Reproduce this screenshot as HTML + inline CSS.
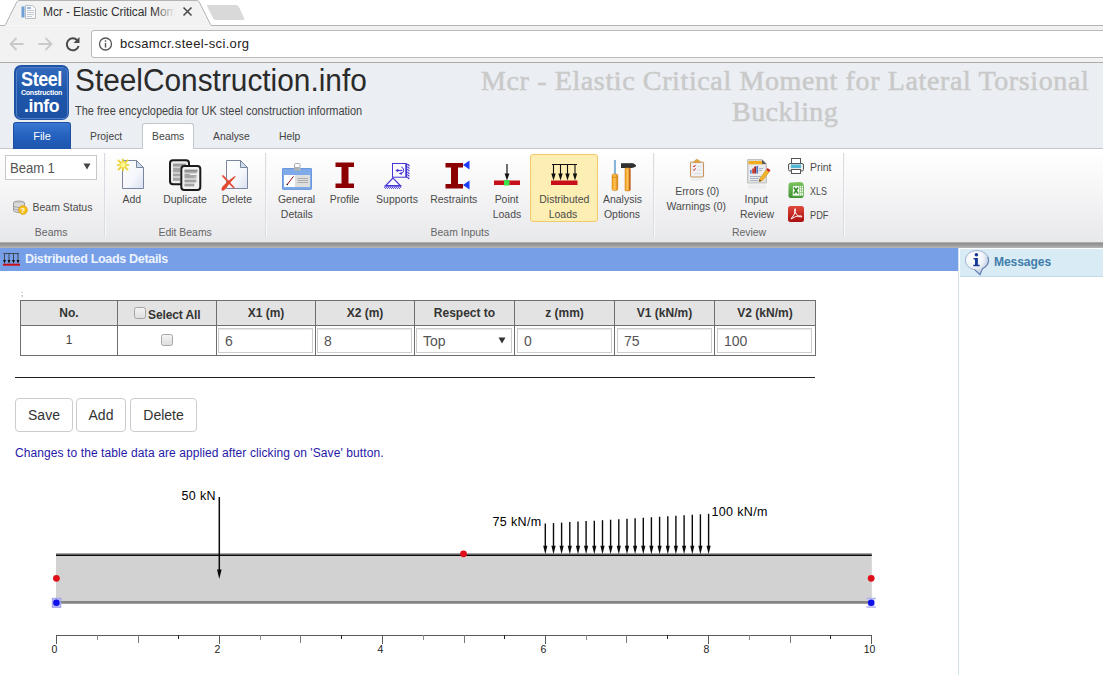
<!DOCTYPE html>
<html><head><meta charset="utf-8">
<style>
*{box-sizing:border-box;margin:0;padding:0}
html,body{width:1103px;height:675px;overflow:hidden;background:#fff;font-family:"Liberation Sans",sans-serif;}
.a{position:absolute}
.t{position:absolute;white-space:nowrap;line-height:1}
#chrome-top{left:0;top:0;width:1103px;height:26px;background:#fff}
#toolbar{left:0;top:26px;width:1103px;height:37px;background:#f2f2f2;border-bottom:1px solid #ababab}
#urlbox{left:91px;top:30px;width:1030px;height:28px;background:#fff;border:1px solid #b9b9b9;border-radius:3px}
#hdr{left:0;top:63px;width:1103px;height:86px;background:#ebeef2}
#ribbon{left:0;top:149px;width:1103px;height:93px;background:linear-gradient(#ffffff 0%,#f7f7f8 40%,#efeff1 70%,#e8e9eb 100%)}
#greybar{left:0;top:241.500px;width:1103px;height:6.500px;background:linear-gradient(#c9c9c9 0,#8e8e8e 18%,#9b9b9b 55%,#b8b8b8 100%)}
#bluebar{left:0;top:248px;width:958px;height:23px;background:#769fe8}
.rl{position:absolute;white-space:nowrap;font-size:11px;color:#4a4a4a;line-height:15px;text-align:center}
.rl span,.gl span{display:inline-block;transform:scaleX(.95)}
.gl{position:absolute;white-space:nowrap;font-size:11px;color:#666;line-height:15px;text-align:center}
.sg{font-size:11px;color:#444;transform:scaleX(.94);transform-origin:0 0}
.sep{position:absolute;top:153px;width:1px;height:84px;background:#d9dce1;box-shadow:1px 0 0 #f8f9fb}
.vl{top:301px;width:1px;height:54px;background:#6e6e6e}
.th{top:307px;text-align:center;font-size:12px;font-weight:bold;color:#333}
.cb{width:12px;height:12px;border:1px solid #a5a5a5;border-radius:2.500px;background:linear-gradient(#f3f3f3,#dedede)}
.inp{position:absolute;top:328px;height:25px;box-shadow:inset 0 1px 1px rgba(0,0,0,.08);background:#fff;border:1px solid #ccc;font-size:14px;color:#555;line-height:25px;padding-left:6px}
.btn{position:absolute;top:398px;height:34px;background:#fff;border:1px solid #ccc;border-radius:4px;font-size:14px;color:#333;line-height:32px;text-align:center}
</style></head><body>

<!-- browser chrome -->
<div class="a" id="chrome-top"></div>
<svg class="a" style="left:0;top:0" width="260" height="27">
  <path d="M0 25.5 L5 25.5 L17 1.5 Q18 0.5 20 0.5 L196 0.5 Q198 0.5 199 1.5 L211 25.5 L260 25.5" fill="#f2f2f2" stroke="#b4b4b4" stroke-width="1"/>
  <rect x="0" y="26" width="260" height="1" fill="#f2f2f2"/>
  <path d="M207 5 L236 5 Q238 5 239 7 L244 18 Q245 20 243 20 L216 20 Q214 20 213 18 L207.500 7 Q206.500 5 207 5Z" fill="#d9d9d9"/>
</svg>
<div class="a" style="left:211px;top:25px;width:892px;height:1px;background:#b4b4b4"></div>
<div class="a" id="toolbar"></div>
<div class="a" id="urlbox"></div>
<div class="t" style="left:43px;top:6px;font-size:12px;color:#333;width:132px;overflow:hidden;letter-spacing:-0.1px">Mcr - Elastic Critical Mom</div>
<div class="a" style="left:155px;top:4px;width:20px;height:18px;background:linear-gradient(90deg,rgba(242,242,242,0),#f2f2f2)"></div>
<div class="t" style="left:120px;top:37px;font-size:13px;color:#222;letter-spacing:0.35px">bcsamcr.steel-sci.org</div>
<svg class="a" style="left:0;top:0" width="120" height="62">
  <!-- favicon -->
  <rect x="21.500" y="6.500" width="3" height="11" fill="#6ea0d8" stroke="none"/>
  <path d="M25.500 5.500 L32.500 5.500 L35.500 8.500 L35.500 18.500 L25.500 18.500Z" fill="#fafafa" stroke="#b8bcc4"/>
  <path d="M27 10.500H34M27 12.500H34M27 14.500H34M27 16.500H32" stroke="#c5c9d2" stroke-width="1"/>
  <rect x="27" y="7" width="4" height="2" fill="#9db8dc"/>
  <!-- back -->
  <path d="M23.500 44 H10.500 M16.500 38 L10.500 44 L16.500 50" fill="none" stroke="#c9c9c9" stroke-width="1.800"/>
  <!-- forward -->
  <path d="M38.500 44 H51.500 M45.500 38 L51.500 44 L45.500 50" fill="none" stroke="#c9c9c9" stroke-width="1.800"/>
  <!-- reload -->
  <path d="M77.200 40.200 A6 6 0 1 0 78.600 46" fill="none" stroke="#4a4a4a" stroke-width="2"/>
  <path d="M79.500 37 L79.500 43 L73.500 43Z" fill="#4a4a4a"/>
  <!-- info -->
  <circle cx="105.500" cy="44" r="6" fill="none" stroke="#555" stroke-width="1.300"/>
  <rect x="104.800" y="43" width="1.400" height="4.500" fill="#555"/>
  <rect x="104.800" y="40.300" width="1.400" height="1.500" fill="#555"/>
</svg>
<svg class="a" style="left:180px;top:4px" width="16" height="16"><path d="M3.500 3.500 L11.500 11.500 M11.500 3.500 L3.500 11.500" stroke="#4a4a4a" stroke-width="1.600"/></svg>

<!-- page header -->
<div class="a" id="hdr"></div>
<!-- logo -->
<div class="a" style="left:14px;top:65px;width:55px;height:55px;border-radius:7px;background:#1f53a6"></div>
<div class="a" style="left:16.500px;top:67.500px;width:50px;height:50px;border-radius:4.500px;background:linear-gradient(#3269bd,#1f57ab 45%,#1c50a2);box-shadow:0 0 0 1px rgba(120,160,225,.55)"></div>
<div class="t" style="left:14px;top:69px;width:55px;text-align:center;font-size:20px;font-weight:bold;color:#fff;letter-spacing:-0.5px;transform:scaleX(.9)">Steel</div>
<div class="t" style="left:14px;top:89px;width:55px;text-align:center;font-size:7px;font-weight:bold;color:#fff;letter-spacing:-0.2px">Construction</div>
<div class="t" style="left:14px;top:96px;width:55px;text-align:center;font-size:19px;font-weight:bold;color:#fff;letter-spacing:-0.5px;transform:scaleX(.93)">.info</div>
<div class="t" style="left:74.500px;top:65px;font-size:31px;color:#2a2a2a;letter-spacing:0;transform:scaleX(.962);transform-origin:0 0">SteelConstruction.info</div>
<div class="t" style="left:75px;top:105px;font-size:12px;color:#444;letter-spacing:0;transform:scaleX(.912);transform-origin:0 0">The free encyclopedia for UK steel construction information</div>
<div class="t" id="rt1" style="left:481px;top:67px;font-family:'Liberation Serif',serif;font-size:28px;color:#c9c9c9;-webkit-text-stroke:0.5px #c9c9c9;letter-spacing:0.62px">Mcr - Elastic Critical Moment for Lateral Torsional</div>
<div class="t" id="rt2" style="left:732px;top:98px;font-family:'Liberation Serif',serif;font-size:28px;color:#c9c9c9;-webkit-text-stroke:0.5px #c9c9c9;letter-spacing:0.45px">Buckling</div>
<!-- tabs -->
<div class="a" style="left:0;top:148px;width:1103px;height:1px;background:#c3c7cd"></div>
<div class="a" style="left:13px;top:122px;width:58px;height:27px;border-radius:3px 3px 0 0;background:linear-gradient(#3a78d2,#2460bd 50%,#1d55ae);border:1px solid #1d4f9f;border-bottom:none"></div>
<div class="t" style="left:13px;top:131px;width:58px;text-align:center;font-size:11px;color:#fff;letter-spacing:-0.1px">File</div>
<div class="t sg" style="left:90px;top:131px;">Project</div>
<div class="a" style="left:142px;top:123px;width:52px;height:27px;border-radius:3px 3px 0 0;background:#fff;border:1px solid #c3c7cd;border-bottom:none"></div>
<div class="t sg" style="left:152px;top:131px;">Beams</div>
<div class="t sg" style="left:213px;top:131px;">Analyse</div>
<div class="t sg" style="left:279px;top:131px;">Help</div>
<div class="a" id="ribbon"></div>

<!-- ribbon content -->
<div class="sep" style="left:104px"></div>
<div class="sep" style="left:265px"></div>
<div class="sep" style="left:653px"></div>
<div class="sep" style="left:843px"></div>
<div class="a" style="left:5px;top:155px;width:92px;height:25px;background:#fff;border:1px solid #c8c8c8"></div>
<div class="t" style="left:10px;top:161px;font-size:14px;color:#555;letter-spacing:-0.1px;transform:scaleX(.94);transform-origin:0 0">Beam 1</div>
<svg class="a" style="left:83px;top:163px" width="8" height="7"><path d="M0.500 0.500 L7.500 0.500 L4 6.500Z" fill="#444"/></svg>
<div class="a" style="left:530px;top:154px;width:68px;height:68px;background:#fdeeb3;border:1px solid #f2ca6b;border-radius:3px"></div>
<div class="rl" style="left:2px;top:200px;width:120px"><span>Beam Status</span></div>
<div class="gl" style="left:-9px;top:225px;width:120px"><span>Beams</span></div>
<div class="rl" style="left:72px;top:192px;width:120px"><span>Add</span></div>
<div class="rl" style="left:125px;top:192px;width:120px"><span>Duplicate</span></div>
<div class="rl" style="left:177px;top:192px;width:120px"><span>Delete</span></div>
<div class="gl" style="left:125px;top:225px;width:120px"><span>Edit Beams</span></div>
<div class="rl" style="left:237px;top:192px;width:120px"><span>General</span></div>
<div class="rl" style="left:237px;top:207px;width:120px"><span>Details</span></div>
<div class="rl" style="left:285px;top:192px;width:120px"><span>Profile</span></div>
<div class="rl" style="left:337px;top:192px;width:120px"><span>Supports</span></div>
<div class="rl" style="left:394px;top:192px;width:120px"><span>Restraints</span></div>
<div class="rl" style="left:447px;top:192px;width:120px"><span>Point</span></div>
<div class="rl" style="left:447px;top:207px;width:120px"><span>Loads</span></div>
<div class="gl" style="left:400px;top:225px;width:120px"><span>Beam Inputs</span></div>
<div class="rl" style="left:504px;top:192px;width:120px"><span>Distributed</span></div>
<div class="rl" style="left:503px;top:207px;width:120px"><span>Loads</span></div>
<div class="rl" style="left:562px;top:192px;width:120px"><span>Analysis</span></div>
<div class="rl" style="left:562px;top:207px;width:120px"><span>Options</span></div>
<div class="rl" style="left:637px;top:184px;width:120px"><span>Errors (0)</span></div>
<div class="rl" style="left:636px;top:199px;width:120px"><span>Warnings (0)</span></div>
<div class="rl" style="left:696px;top:192px;width:120px"><span>Input</span></div>
<div class="rl" style="left:697px;top:207px;width:120px"><span>Review</span></div>
<div class="gl" style="left:689px;top:225px;width:120px"><span>Review</span></div>
<div class="rl" style="left:809.500px;top:160px;text-align:left"><span style="transform-origin:0 50%">Print</span></div>
<div class="rl" style="left:809.500px;top:184px;text-align:left"><span style="transform-origin:0 50%;transform:scaleX(.81)">XLS</span></div>
<div class="rl" style="left:809.500px;top:208px;text-align:left"><span style="transform-origin:0 50%;transform:scaleX(.84)">PDF</span></div>

<svg class="a" style="left:0;top:149px" width="860" height="92" viewBox="0 149 860 92">
<defs>
<linearGradient id="pg" x1="0" y1="0" x2="1" y2="1"><stop offset="0" stop-color="#ffffff"/><stop offset="0.6" stop-color="#f4f6fb"/><stop offset="1" stop-color="#d9e0f0"/></linearGradient>
<radialGradient id="glow"><stop offset="0" stop-color="#fff7a0"/><stop offset="0.6" stop-color="#fdee7a" stop-opacity=".8"/><stop offset="1" stop-color="#fdee7a" stop-opacity="0"/></radialGradient>
<linearGradient id="org" x1="0" y1="0" x2="1" y2="0"><stop offset="0" stop-color="#f6a21a"/><stop offset="0.5" stop-color="#fbc35a"/><stop offset="1" stop-color="#d97b06"/></linearGradient>
<linearGradient id="grn" x1="0" y1="0" x2="0" y2="1"><stop offset="0" stop-color="#7cc660"/><stop offset="1" stop-color="#3d9130"/></linearGradient>
<linearGradient id="red" x1="0" y1="0" x2="0" y2="1"><stop offset="0" stop-color="#e0483c"/><stop offset="1" stop-color="#a80f0f"/></linearGradient>
</defs>
<!-- beam status -->
<g>
<ellipse cx="19" cy="203" rx="5.500" ry="2" fill="#c9c9c9" stroke="#8f8f8f" stroke-width=".8"/>
<path d="M13.500 203 V210.500 A5.500 2 0 0 0 24.500 210.500 V203" fill="#d8d8d8" stroke="#8f8f8f" stroke-width=".8"/>
<path d="M13.500 205.500 A5.500 2 0 0 0 24.500 205.500 M13.500 208 A5.500 2 0 0 0 24.500 208" fill="none" stroke="#8f8f8f" stroke-width=".7"/>
<circle cx="23" cy="210" r="4.300" fill="#f7c21e" stroke="#d99a07" stroke-width=".8"/>
<text x="23" y="212.600" font-family="Liberation Sans" font-size="7" font-weight="bold" fill="#fff" text-anchor="middle">?</text>
</g>
<!-- add -->
<path d="M122.500 160.500 H136.500 L143.500 167.500 V188.500 H122.500Z" fill="url(#pg)" stroke="#7a869e" stroke-width="1"/>
<path d="M136.500 160.500 V167.500 H143.500Z" fill="#d3dcee" stroke="#7a869e" stroke-width="1" stroke-linejoin="round"/>
<circle cx="123" cy="165" r="5" fill="url(#glow)"/><g stroke="#e9cf2c" stroke-width="1.700" stroke-linecap="butt" opacity=".95"><path d="M125.2 165.0L129.3 165.0M124.6 166.6L128.1 170.1M123.0 167.2L123.0 171.3M121.4 166.6L117.9 170.1M120.8 165.0L116.7 165.0M121.4 163.4L117.9 159.9M123.0 162.8L123.0 158.7M124.6 163.4L128.1 159.9"/></g><circle cx="123" cy="165" r="2.400" fill="#fff68c"/>

<!-- duplicate -->
<rect x="170" y="160.300" width="19" height="24" rx="3" fill="#ededed" stroke="#1a1a1a" stroke-width="2"/>
<rect x="173" y="163.500" width="13" height="3" fill="#a9a9a9"/><rect x="173" y="167.500" width="7" height="5" fill="#b4b4b4"/><rect x="173" y="173.500" width="7" height="3" fill="#b0b0b0"/><rect x="173" y="177.500" width="7" height="3.500" fill="#b4b4b4"/>
<g stroke="#888" stroke-width=".6"><path d="M173 164.500H186M173 166H185M173 169H180M173 171H180M173 175H180M173 179H180"/></g>
<rect x="181.300" y="166" width="19" height="24" rx="3" fill="#f3f3f3" stroke="#1a1a1a" stroke-width="2"/>
<rect x="184.500" y="169.500" width="13" height="3" fill="#a4a4a4"/><rect x="184.500" y="173.500" width="12" height="5" fill="#b6b6b6"/><rect x="184.500" y="179.500" width="12" height="3" fill="#b0b0b0"/><rect x="184.500" y="183.500" width="10" height="3" fill="#b6b6b6"/>
<g stroke="#858585" stroke-width=".6"><path d="M184.500 170.500H197.500M184.500 172H196M184.500 175H196.500M184.500 177H194M184.500 181H196M184.500 185H194"/></g>
<path d="M190 174.500H197" stroke="#f3f3f3" stroke-width="1"/>
<!-- delete -->
<path d="M226.500 160.500 H240.500 L247.500 167.500 V188.500 H226.500Z" fill="url(#pg)" stroke="#7a869e" stroke-width="1"/>
<path d="M240.500 160.500 V167.500 H247.500Z" fill="#d3dcee" stroke="#7a869e" stroke-width="1" stroke-linejoin="round"/>
<path d="M221.600 175.800 Q222.500 174.600 223.800 175.600 Q229 181 234.800 187.600 L233.600 188.600 Q227 182.500 221.600 175.800Z" fill="#e5503a"/>
<path d="M235.600 176.800 L234.800 176 Q228 180.500 223 186 Q220.800 188.800 221.800 190.200 Q223.200 191.400 225.300 189.300 Q229.500 183 235.600 176.800Z" fill="#e4472f"/>
<!-- general details -->
<rect x="282" y="168" width="30" height="21.800" rx="1.200" fill="#7faae9"/>
<rect x="282.500" y="168.500" width="29" height="20.800" rx="1.200" fill="none" stroke="#6a97dc" stroke-width="1"/>
<rect x="284" y="175" width="26" height="12" fill="#dedede"/>
<rect x="284" y="175" width="11" height="12" fill="#fff"/>
<path d="M287.400 184.300 L293.500 176.300" stroke="#8e1010" stroke-width="1"/>
<circle cx="287.300" cy="184.500" r=".8" fill="#111"/>
<path d="M297.500 178.500H308M297.500 180.500H308M297.500 182.500H308" stroke="#adadad" stroke-width="1"/>
<rect x="294.500" y="163.500" width="5.500" height="7" rx="1" fill="#fdfdfd" stroke="#a7adb5" stroke-width="1"/>
<rect x="295" y="167" width="4.500" height="3.300" fill="#a9b0b6"/>
<!-- profile -->
<path d="M335.500 162.500 H354 V167 H348.500 V183.500 H354 V188 H335.500 V183.500 H341.500 V167 H335.500Z" fill="#8b0000"/>
<!-- supports -->
<g stroke="#4636d4" fill="none" stroke-width="1">
<rect x="392.500" y="163.500" width="13.500" height="13.700" fill="#fbfbff"/>
<path d="M406.300 163.500V177.500" stroke-width="1.600"/>
<path d="M407.300 164L409.500 166M407.300 166.600L409.500 168.600M407.300 169.200L409.500 171.200M407.300 171.800L409.500 173.800M407.300 174.400L409.500 176.400M407.300 177L409.200 179" stroke-width="1.100"/>
<path d="M393 178 L385.800 185.500 H400.300Z" fill="#fbfbff" stroke-width="1.100"/>
<path d="M384.500 186.100H401.500" stroke-width="1.200"/>
<path d="M384 187.300H401" stroke-dasharray="1 1" stroke-width="1"/>
<path d="M385 188.300H401" stroke-dasharray="1 1" stroke-width="1"/>
<path d="M396 170.500H402.300" stroke-width="1.100"/>
<path d="M398.300 168.800L395.300 170.500L398.300 172.200Z" fill="#4636d4" stroke="none"/>
<path d="M401.300 167 A3.400 3.400 0 0 1 401.600 173.400" stroke-width="1"/>
<path d="M401.800 171.800L398.800 173.500L401.800 175Z" fill="#4636d4" stroke="none"/>
</g>
<!-- restraints -->
<path d="M445.500 163 H463 V167.500 H458 V184 H463 V188.500 H445.500 V184 H451 V167.500 H445.500Z" fill="#8b0000"/>
<path d="M463 165 L469.500 160.500 V169.500Z M463 185 L469.500 180.500 V189.500Z" fill="#1a3cff"/>
<!-- point loads -->
<rect x="494" y="180.500" width="26" height="4.500" fill="#c8101a"/>
<rect x="504" y="180" width="5.500" height="5.500" fill="#3be04a"/>
<path d="M507 164V178" stroke="#111" stroke-width="1.200"/>
<path d="M504.600 173.500 L507 180.500 L509.400 173.500Z" fill="#111"/>
<!-- distributed loads -->
<rect x="551" y="180.500" width="26.500" height="4.500" fill="#c8101a"/>
<path d="M552 164.500H577M553.500 164.500V177M560.500 164.500V177M567.500 164.500V177M575 164.500V177" stroke="#111" stroke-width="1.100" fill="none"/>
<path d="M551.300 173.500L553.500 180.500L555.700 173.500Z M558.300 173.500L560.500 180.500L562.700 173.500Z M565.300 173.500L567.500 180.500L569.700 173.500Z M572.800 173.500L575 180.500L577.200 173.500Z" fill="#111"/>
<!-- analysis options -->
<rect x="613.900" y="160" width="2.100" height="14.500" fill="#86b6da"/>
<rect x="612" y="174" width="5.800" height="16.600" rx="1.800" fill="url(#org)" stroke="#c97a08" stroke-width=".5"/>
<path d="M612 177.300H617.800" stroke="#c97a08" stroke-width=".7"/>
<path d="M621 163.800 Q621 163 622 163 H631.500 Q633.500 163.200 635.900 165 V166.500 Q634 167.600 631.500 167.900 H621Z" fill="#2f2f2f"/>
<path d="M621.500 163.600H631.500" stroke="#6a6a6a" stroke-width=".8"/>
<rect x="625" y="167.900" width="5.200" height="23" rx="1" fill="url(#org)" stroke="#c26a10" stroke-width=".5"/>
<path d="M629.900 168.500V190" stroke="#a63a1a" stroke-width=".7"/>
<!-- errors clipboard -->
<rect x="690.500" y="162" width="13" height="15" rx="1.200" fill="#f0f1f4" stroke="#c8935c" stroke-width="1.100"/>
<path d="M693.500 162.500 L695.500 160 Q697 158.800 698.500 160 L700.500 162.500Z" fill="#e3a63f" stroke="#c48a35" stroke-width=".6"/>
<path d="M693 166l1 1l1.600-2.200M693 169.500l1 1l1.600-2.200" stroke="#d62828" stroke-width="1" fill="none"/>
<path d="M697 166.500H701.500M697 170H701.500M694 173.500H701" stroke="#d5d8de" stroke-width=".9"/>
<path d="M691 179.500H703.500" stroke="#e4e5e8" stroke-width="1.500" opacity=".7"/>
<!-- input review -->
<path d="M747.500 159.500 H762 L766.500 164 V183 H747.500Z" fill="#d9d9d9" stroke="#c4c4c4" stroke-width="1"/>
<rect x="749" y="164.500" width="16" height="17" fill="#ebebeb"/>
<path d="M748.500 161 H762.500 L765 164.300 H748.500Z" fill="#f2ad1f"/>
<path d="M762 159.500 V164 H766.500Z" fill="#5e5e5e"/>
<rect x="750" y="170" width="1.700" height="3.500" fill="#5b8fd6"/><rect x="752.200" y="168.500" width="1.800" height="5" fill="#cf3a2c"/><rect x="754.200" y="166.500" width="1.800" height="7" fill="#a3231b"/><rect x="756.300" y="166" width="1.800" height="7.500" fill="#5577cc"/>
<path d="M759 168.500H763M759 170.500H762M750 176.500H761M750 178.500H759M750 180.500H758" stroke="#aab4c4" stroke-width="1"/>
<path d="M759.800 178.500 L766.300 169.800 L769.200 172 L762.600 180.600 L759.200 181.600Z" fill="#f0b42c" stroke="#c98a12" stroke-width=".5"/>
<path d="M766.300 169.800 L767.600 168 L770.500 170.200 L769.200 172Z" fill="#cc1f1f"/>
<path d="M759.200 181.600 L759.600 179.600 L761.200 180.900Z" fill="#222"/>
<path d="M748 184.500 H766 V189 H748Z" fill="#e6e7ea" opacity=".55"/>
<!-- print -->
<rect x="791.500" y="158.500" width="9" height="6" fill="#fff" stroke="#555" stroke-width="1"/>
<rect x="788.500" y="163.500" width="15" height="7.500" rx="1.500" fill="#e8eaec" stroke="#555" stroke-width="1"/>
<rect x="791" y="164.500" width="10" height="3.500" fill="#55b7d6"/>
<rect x="791.500" y="169.500" width="9" height="4" fill="#fff" stroke="#555" stroke-width="1"/>
<!-- xls -->
<path d="M788.500 185 Q788.500 183 790.500 182.600 L800 182 Q803.500 182 803.500 184.500 V196 Q803.500 198 801.500 198 H790.500 Q788.500 198 788.500 196Z" fill="url(#grn)"/>
<rect x="792.500" y="185.500" width="11" height="10.500" fill="#f4f9f1" stroke="#6aae55" stroke-width=".8"/>
<path d="M799.500 187.500H803M799.500 190H803M799.500 192.500H803M799.500 186V196M801.500 186V196" stroke="#8cc47a" stroke-width=".8"/>
<path d="M794 187.500 L798 193.500 M798 187.500 L794 193.500" stroke="#2f8a2a" stroke-width="1.500"/>
<!-- pdf -->
<rect x="788" y="206" width="16" height="16" rx="2.500" fill="url(#red)"/>
<path d="M791 219 Q795.500 214 795.500 209.500 Q795.500 208 794.700 209 Q794 211 796.500 214.500 Q799 217.500 801.500 217 Q802.500 216 800.500 215.800 Q796 215.500 791 219Z" fill="none" stroke="#fff" stroke-width="1"/>
</svg>
<div class="a" id="greybar"></div>
<div class="a" id="bluebar"></div>


<!-- title bar contents -->
<svg class="a" style="left:2px;top:252px" width="18" height="15" viewBox="0 0 18 15">
<path d="M1.500 1.500H17M2.500 1.500V10M7 1.500V10M11.500 1.500V10M16 1.500V10" stroke="#333" stroke-width=".8" fill="none"/>
<path d="M1 8L2.500 11.500L4 8Z M5.500 8L7 11.500L8.500 8Z M10 8L11.500 11.500L13 8Z M14.500 8L16 11.500L17.500 8Z" fill="#111"/>
<rect x="1" y="11.700" width="17" height="2" fill="#c8101a"/>
</svg>
<div class="t" style="left:25px;top:252px;font-size:13px;font-weight:bold;color:#edf3ff;letter-spacing:-0.35px;transform:scaleX(.965);transform-origin:0 0">Distributed Loads Details</div>
<div class="t" style="left:21px;top:290px;font-size:8px;color:#666">;</div>
<!-- table -->
<div class="a" style="left:20px;top:300px;width:795.500px;height:56px;background:#6e6e6e"></div>
<div class="a" style="left:21px;top:301px;width:793.500px;height:24px;background:#e3e3e3"></div>
<div class="a" style="left:21px;top:326px;width:793.500px;height:29px;background:#fff"></div>
<div class="a vl" style="left:117px"></div><div class="a vl" style="left:216px"></div><div class="a vl" style="left:315px"></div><div class="a vl" style="left:414px"></div><div class="a vl" style="left:514px"></div><div class="a vl" style="left:614px"></div><div class="a vl" style="left:714px"></div>
<div class="t th" style="left:21px;width:96px">No.</div>
<div class="t th" style="left:217px;width:98px">X1 (m)</div>
<div class="t th" style="left:316px;width:98px">X2 (m)</div>
<div class="t th" style="left:415px;width:99px">Respect to</div>
<div class="t th" style="left:515px;width:99px">z (mm)</div>
<div class="t th" style="left:615px;width:99px">V1 (kN/m)</div>
<div class="t th" style="left:715px;width:100px">V2 (kN/m)</div>
<div class="a cb" style="left:134px;top:307px"></div>
<div class="t" style="left:148px;top:309px;font-size:12px;font-weight:bold;color:#333;letter-spacing:-0.1px">Select All</div>
<div class="t" style="left:21px;top:334px;width:96px;text-align:center;font-size:12px;color:#444">1</div>
<div class="a cb" style="left:161px;top:334px"></div>
<div class="inp" style="left:218px;width:95px">6</div>
<div class="inp" style="left:317px;width:95px">8</div>
<div class="inp" style="left:416px;width:96px">Top</div>
<svg class="a" style="left:498px;top:337px" width="8" height="7"><path d="M0.500 0.500 L7.500 0.500 L4 6.500Z" fill="#333"/></svg>
<div class="inp" style="left:517px;width:95px">0</div>
<div class="inp" style="left:617px;width:95px">75</div>
<div class="inp" style="left:717px;width:95px">100</div>
<div class="a" style="left:15px;top:377px;width:800px;height:1px;background:#222"></div>
<div class="btn" style="left:15px;width:58px">Save</div>
<div class="btn" style="left:76px;width:50px">Add</div>
<div class="btn" style="left:130px;width:67px">Delete</div>
<div class="t" style="left:15px;top:447px;font-size:12px;color:#2618a8;letter-spacing:0.092px">Changes to the table data are applied after clicking on 'Save' button.</div>
<!-- diagram -->
<svg class="a" style="left:0;top:480px" width="958" height="195" viewBox="0 480 958 195">
<rect x="56" y="553" width="815.800" height="50.700" fill="#d2d2d2"/>
<rect x="56" y="553" width="815.800" height="1.600" fill="#a6a6a6"/>
<rect x="56" y="554.500" width="815.800" height="1.500" fill="#0a0a0a"/>
<rect x="56" y="601" width="815.800" height="2.700" fill="#858585"/>
<path d="M219.300 497V572" stroke="#0a0a0a" stroke-width="1.500"/>
<path d="M217 569.500L219.300 579L221.600 569.500Z" fill="#0a0a0a"/>
<path d="M545.3 523.6V548" stroke="#0a0a0a" stroke-width="1.400"/><path d="M543.2 545.700L545.3 554.300L547.4 545.700Z" fill="#0a0a0a"/>
<path d="M553.5 523.1V548" stroke="#0a0a0a" stroke-width="1.400"/><path d="M551.4 545.700L553.5 554.300L555.6 545.700Z" fill="#0a0a0a"/>
<path d="M561.6 522.6V548" stroke="#0a0a0a" stroke-width="1.400"/><path d="M559.5 545.700L561.6 554.300L563.7 545.700Z" fill="#0a0a0a"/>
<path d="M569.8 522.1V548" stroke="#0a0a0a" stroke-width="1.400"/><path d="M567.7 545.700L569.8 554.300L571.9 545.700Z" fill="#0a0a0a"/>
<path d="M578.0 521.6V548" stroke="#0a0a0a" stroke-width="1.400"/><path d="M575.9 545.700L578.0 554.300L580.1 545.700Z" fill="#0a0a0a"/>
<path d="M586.1 521.1V548" stroke="#0a0a0a" stroke-width="1.400"/><path d="M584.0 545.700L586.1 554.300L588.2 545.700Z" fill="#0a0a0a"/>
<path d="M594.3 520.7V548" stroke="#0a0a0a" stroke-width="1.400"/><path d="M592.2 545.700L594.3 554.300L596.4 545.700Z" fill="#0a0a0a"/>
<path d="M602.5 520.2V548" stroke="#0a0a0a" stroke-width="1.400"/><path d="M600.4 545.700L602.5 554.300L604.6 545.700Z" fill="#0a0a0a"/>
<path d="M610.6 519.7V548" stroke="#0a0a0a" stroke-width="1.400"/><path d="M608.5 545.700L610.6 554.300L612.7 545.700Z" fill="#0a0a0a"/>
<path d="M618.8 519.2V548" stroke="#0a0a0a" stroke-width="1.400"/><path d="M616.7 545.700L618.8 554.300L620.9 545.700Z" fill="#0a0a0a"/>
<path d="M627.0 518.7V548" stroke="#0a0a0a" stroke-width="1.400"/><path d="M624.9 545.700L627.0 554.300L629.1 545.700Z" fill="#0a0a0a"/>
<path d="M635.1 518.2V548" stroke="#0a0a0a" stroke-width="1.400"/><path d="M633.0 545.700L635.1 554.300L637.2 545.700Z" fill="#0a0a0a"/>
<path d="M643.3 517.7V548" stroke="#0a0a0a" stroke-width="1.400"/><path d="M641.2 545.700L643.3 554.300L645.4 545.700Z" fill="#0a0a0a"/>
<path d="M651.4 517.2V548" stroke="#0a0a0a" stroke-width="1.400"/><path d="M649.3 545.700L651.4 554.300L653.5 545.700Z" fill="#0a0a0a"/>
<path d="M659.6 516.7V548" stroke="#0a0a0a" stroke-width="1.400"/><path d="M657.5 545.700L659.6 554.300L661.7 545.700Z" fill="#0a0a0a"/>
<path d="M667.8 516.2V548" stroke="#0a0a0a" stroke-width="1.400"/><path d="M665.7 545.700L667.8 554.300L669.9 545.700Z" fill="#0a0a0a"/>
<path d="M675.9 515.8V548" stroke="#0a0a0a" stroke-width="1.400"/><path d="M673.8 545.700L675.9 554.300L678.0 545.700Z" fill="#0a0a0a"/>
<path d="M684.1 515.3V548" stroke="#0a0a0a" stroke-width="1.400"/><path d="M682.0 545.700L684.1 554.300L686.2 545.700Z" fill="#0a0a0a"/>
<path d="M692.3 514.8V548" stroke="#0a0a0a" stroke-width="1.400"/><path d="M690.2 545.700L692.3 554.300L694.4 545.700Z" fill="#0a0a0a"/>
<path d="M700.4 514.3V548" stroke="#0a0a0a" stroke-width="1.400"/><path d="M698.3 545.700L700.4 554.300L702.5 545.700Z" fill="#0a0a0a"/>
<path d="M708.6 513.8V548" stroke="#0a0a0a" stroke-width="1.400"/><path d="M706.5 545.700L708.6 554.300L710.7 545.700Z" fill="#0a0a0a"/>
<circle cx="56.4" cy="578.3" r="3.400" fill="#e0101a"/>
<circle cx="463.5" cy="553.8" r="3.400" fill="#e0101a"/>
<circle cx="871.2" cy="578.3" r="3.400" fill="#e0101a"/>
<rect x="52.300" y="598.300" width="8.500" height="9" fill="#bcbcf7" stroke="#9c9cf2" stroke-width="1"/>
<circle cx="56.400" cy="602.800" r="3.300" fill="#1010ea"/>
<path d="M866.500 598.500H875.800M866.500 607H875.800" stroke="#aeb0f4" stroke-width="1.600"/>
<rect x="868" y="599" width="6.500" height="7.500" fill="#cfd0fa"/>
<circle cx="871.200" cy="602.800" r="3.300" fill="#1010ea"/>
<path d="M56 635.500H871.500" stroke="#5a5a5a" stroke-width="1"/>
<path d="M56.5 635V644" stroke="#5a5a5a" stroke-width="1"/><path d="M97.5 635V640" stroke="#888" stroke-width="1"/><path d="M138.5 635V643" stroke="#777" stroke-width="1"/><path d="M178.5 635V639" stroke="#222" stroke-width="1"/><path d="M219.5 635V644" stroke="#5a5a5a" stroke-width="1"/><path d="M260.5 635V640" stroke="#888" stroke-width="1"/><path d="M300.5 635V643" stroke="#777" stroke-width="1"/><path d="M341.5 635V639" stroke="#222" stroke-width="1"/><path d="M382.5 635V644" stroke="#5a5a5a" stroke-width="1"/><path d="M423.5 635V640" stroke="#888" stroke-width="1"/><path d="M464.5 635V643" stroke="#777" stroke-width="1"/><path d="M504.5 635V639" stroke="#222" stroke-width="1"/><path d="M545.5 635V644" stroke="#5a5a5a" stroke-width="1"/><path d="M586.5 635V640" stroke="#888" stroke-width="1"/><path d="M626.5 635V643" stroke="#777" stroke-width="1"/><path d="M667.5 635V639" stroke="#222" stroke-width="1"/><path d="M708.5 635V644" stroke="#5a5a5a" stroke-width="1"/><path d="M749.5 635V640" stroke="#888" stroke-width="1"/><path d="M790.5 635V643" stroke="#777" stroke-width="1"/><path d="M830.5 635V639" stroke="#222" stroke-width="1"/><path d="M871.5 635V644" stroke="#5a5a5a" stroke-width="1"/>
<text x="54.5" y="653" font-family="Liberation Sans" font-size="10.500" fill="#222" text-anchor="middle">0</text><text x="217.5" y="653" font-family="Liberation Sans" font-size="10.500" fill="#222" text-anchor="middle">2</text><text x="380.5" y="653" font-family="Liberation Sans" font-size="10.500" fill="#222" text-anchor="middle">4</text><text x="543.5" y="653" font-family="Liberation Sans" font-size="10.500" fill="#222" text-anchor="middle">6</text><text x="706.5" y="653" font-family="Liberation Sans" font-size="10.500" fill="#222" text-anchor="middle">8</text><text x="869.5" y="653" font-family="Liberation Sans" font-size="10.500" fill="#222" text-anchor="middle">10</text>
<text x="181.500" y="499.700" font-family="Liberation Sans" font-size="12.500" fill="#000" letter-spacing="0.350">50 kN</text>
<text x="492.500" y="526" font-family="Liberation Sans" font-size="12.500" fill="#000" letter-spacing="0.350">75 kN/m</text>
<text x="711.500" y="516.300" font-family="Liberation Sans" font-size="12.500" fill="#000" letter-spacing="0.350">100 kN/m</text>
</svg>
<!-- messages panel -->
<div class="a" style="left:958px;top:248px;width:1px;height:427px;background:#cfe4ee"></div>
<div class="a" style="left:960px;top:249px;width:143px;height:28px;background:#d9ecf6;border-bottom:1px solid #c3dceb"></div>
<svg class="a" style="left:962px;top:248px" width="30" height="29" viewBox="0 0 30 29">
<defs><radialGradient id="bub" cx="0.36" cy="0.3" r="0.8"><stop offset="0" stop-color="#ffffff"/><stop offset="0.5" stop-color="#f0f4f9"/><stop offset="0.8" stop-color="#c3d1e4"/><stop offset="1" stop-color="#6f8fbd"/></radialGradient></defs>
<path d="M15 2.600 C21.500 2.600 26.700 6.900 26.700 12.300 C26.700 15.800 24.300 18.900 20.300 20.700 L18 26.600 L13.200 21.900 C7.500 21 3.400 17 3.400 12.300 C3.400 6.900 8.500 2.600 15 2.600Z" fill="url(#bub)" stroke="#93a9c9" stroke-width=".9"/>
<path d="M25.800 9 C27.800 14 25 19 20.500 20.800 L18 26.800 L13 22" fill="none" stroke="#4d6da6" stroke-width="1.100" opacity=".75"/>
<circle cx="14.400" cy="6.700" r="1.800" fill="#17399a"/>
<path d="M11.500 10 H15.900 V16.800 H17.600 V18.300 H11.300 V16.800 H13 V11.500 H11.500Z" fill="#17399a"/>
</svg>
<div class="t" style="left:994px;top:255px;font-size:13px;font-weight:bold;color:#3f7cab;letter-spacing:-0.1px;transform:scaleX(.93);transform-origin:0 0">Messages</div>

</body></html>
